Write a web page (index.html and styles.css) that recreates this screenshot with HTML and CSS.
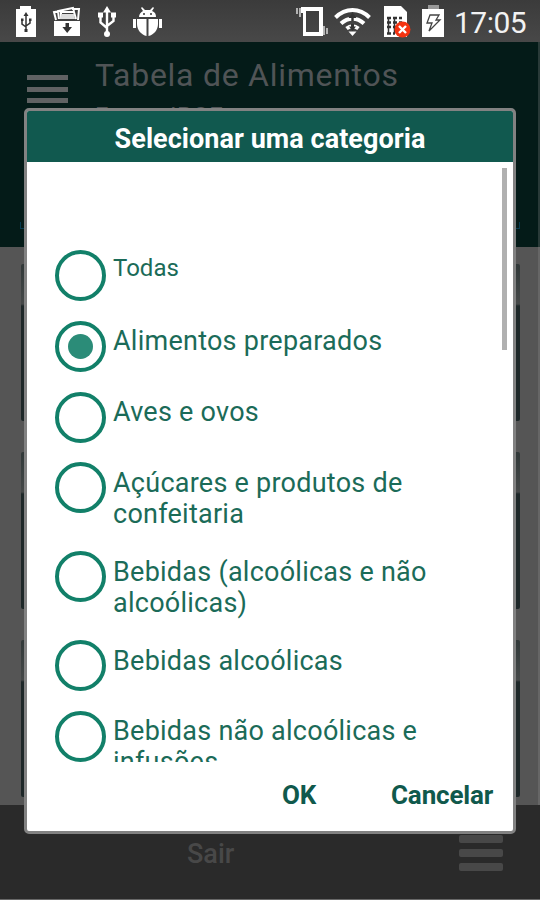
FILE: index.html
```html
<!DOCTYPE html>
<html lang="pt-BR">
<head>
<meta charset="utf-8">
<title>Tabela de Alimentos</title>
<link rel="stylesheet" href="styles.css">
</head>
<body>
<div class="screen">
  <div class="status">
    <svg class="icons-left" width="180" height="42" viewBox="0 0 180 42">
      <path fill="#fff" d="M20 6h11v3h5v28H16V9h4z"/>
      <g fill="none" stroke="#333" stroke-width="1.5"><path d="M26 15v16M22 20v4l4 3M30 20v3l-4 3"/></g>
      <path fill="#333" d="M26 12l2.500 4h-5zM24.500 29h3v3h-3zM21 18.500h2.500v2.500H21zM29 18.500h2.500v2.500H29z"/>
      <path fill="#fff" d="M54 21h26v15H54z"/>
      <path fill="none" stroke="#fff" stroke-width="2" d="M56 20l-2-8 7-1M59 19l-1-8 15-3 1 3M61 19V12h13l2 7M72 9h7l-1 11"/>
      <path fill="#ddd" d="M61 14h13l1 5H60z"/>
      <path fill="#333" d="M65.500 23h3.500v4h3l-4.800 6-4.800-6h3.100z"/>
      <g fill="none" stroke="#fff" stroke-width="2.400"><path d="M107 10v23M100.500 16v6.500l6.500 5.500M113.500 15v6l-6.500 5"/></g>
      <path fill="#fff" d="M107 6l4 6.500h-8zM98 12.500h5v5h-5zM111 12.500h5v5h-5z"/><circle cx="107" cy="34" r="3" fill="#fff"/>
      <path fill="#fff" d="M139 17c0-3 2-5 4-6l-2-3 1-1 3 3h5l3-3 1 1-2 3c3 1 4 3 4 6zM137 19h9.500v17c-5-1-9.500-6-9.500-12zM148.500 19h9.500v5c0 6-4.500 11-9.500 12zM133 19h3v9h-3zM159 19h3v9h-3z"/>
      <circle cx="144" cy="14" r="1" fill="#333"/><circle cx="151" cy="14" r="1" fill="#333"/>
    </svg>
    <svg class="icons-right" width="150" height="42" viewBox="296 0 150 42">
      <path fill="#fff" fill-rule="evenodd" d="M301 7h22v29h-20V13h-2zM306 11v21h13V11z"/>
      <path fill="none" stroke="#d0d0d0" stroke-width="1.600" d="M297 8v6M300 8v9M324 26v9M327 28v6"/>
      <g fill="none" stroke="#fff" stroke-width="4"><path d="M335.500 17.500c10-10 24-10 34 0"/><path d="M341 23.500c7-6.500 16-6.500 23 0"/><path d="M346.500 28.500c4-3 8-3 12 0"/></g>
      <path fill="#fff" d="M348.500 31.500h8l-4 4.500z"/>
      <path fill="#333" d="M352.500 12.500l4 5.500h-2.800v3h-2.400v-3h-2.800zM352.500 31l-3.500-4.500h2v-2.500h3v2.500h2z"/>
      <path fill="#fff" d="M384 6h17l6 6v25h-23z"/>
      <path fill="none" stroke="#333" stroke-width="2.500" stroke-dasharray="4 2" d="M387 18h15M387 22.500h15M387 27h9M387 33.500h8"/>
      <path fill="none" stroke="#333" stroke-width="1.500" d="M388.500 17v17M394.500 17v17"/>
      <circle cx="402.500" cy="29.500" r="8" fill="#f43210"/>
      <path stroke="#fff" stroke-width="2.400" d="M399 26l7 7M406 26l-7 7"/>
      <path fill="#999" d="M428 5h11v4h-11z"/><path fill="#fff" d="M422 9h22v28h-22z"/>
      <path fill="#fff" stroke="#444" stroke-width="1.300" d="M430 15h9l-3 5h4l-11 11 3-8h-5z"/>
    </svg>
    <span class="clock">17:05</span>
  </div>
  <div class="header">
    <div class="burger"><i></i><i></i><i></i></div>
    <div class="titles"><div class="title">Tabela de Alimentos</div><div class="sub">Fonte: IBGE</div></div>
    <div class="field"></div>
  </div>
  <div class="content">
    <div class="card"></div><div class="card"></div><div class="card"></div>
  </div>
  <div class="footer">
    <span class="exit">Sair</span>
    <div class="menu"><i></i><i></i><i></i></div>
  </div>
  <div class="dialog">
    <div class="dialog-title"><span>Selecionar uma categoria</span></div>
    <div class="list">
      <div class="option small"><span class="radio"></span><span class="label">Todas</span></div>
      <div class="option"><span class="radio on"></span><span class="label">Alimentos preparados</span></div>
      <div class="option"><span class="radio"></span><span class="label">Aves e ovos</span></div>
      <div class="option"><span class="radio"></span><span class="label">Açúcares e produtos de<br>confeitaria</span></div>
      <div class="option"><span class="radio"></span><span class="label">Bebidas (alcoólicas e não<br>alcoólicas)</span></div>
      <div class="option"><span class="radio"></span><span class="label">Bebidas alcoólicas</span></div>
      <div class="option"><span class="radio"></span><span class="label">Bebidas não alcoólicas e<br>infusões</span></div>
      <div class="scrollbar"></div>
    </div>
    <div class="actions"><span class="ok">OK</span><span class="cancel">Cancelar</span></div>
  </div>
</div>
</body>
</html>
```
FILE: styles.css
```css
* { box-sizing: border-box; }
body { margin: 0; font-family: Roboto, sans-serif; }
.screen { position: relative; width: 540px; height: 900px; overflow: hidden; display: flex; flex-direction: column; background: #555; }
.status { height: 42px; flex: none; display: flex; background: linear-gradient(#3b3b3b, #484848); }
.icons-right { margin-left: 116px; }
.clock { margin-left: 8px; color: #f2f2f2; font-size: 30px; line-height: 46px; letter-spacing: -0.5px; white-space: nowrap; }
.header { position: relative; height: 205px; flex: none; display: flex; background: #041b18; border-right: 2px solid #293a38; }
.field { position: absolute; left: 20px; top: 180px; width: 500px; height: 7px; border: 1px solid #073b50; border-top: 0; }
.burger { width: 41px; margin: 33px 0 0 27px; display: flex; flex-direction: column; gap: 6.7px; }
.burger i { height: 5px; flex: none; background: #606263; }
.titles { margin: 15px 0 0 27px; color: #505456; white-space: nowrap; }
.title { font-size: 32px; line-height: 36px; letter-spacing: 0.73px; }
.sub { font-size: 24px; line-height: 28px; margin-top: 9px; letter-spacing: 0.4px; }
.content { height: 558px; flex: none; padding: 17px 18px 0 21px; display: flex; flex-direction: column; gap: 31px; border-right: 2px solid #666; }
.card { height: 157px; border-radius: 2px; background: linear-gradient(#303838, #454848 40px, #1d2728 42px); }
.footer { height: 95px; flex: none; display: flex; background: #2a2a2a; border-bottom: 1px solid #686868; }
.exit { margin: 33px 0 0 187px; width: 50px; color: #484848; font-size: 27px; font-weight: 500; line-height: 32px; }
.menu { width: 44px; margin: 25px 0 0 222px; display: flex; flex-direction: column; gap: 6px; padding-top: 5px; }
.menu i { height: 8px; border-radius: 2px; background: #484848; }
.dialog { position: absolute; left: 24px; top: 108px; width: 492px; height: 726px; border: 3px solid #828282; border-radius: 5px; background: #fff; display: flex; flex-direction: column; overflow: hidden; color: #1b6b58; }
.dialog-title { height: 51px; flex: none; background: #11594f; color: #fff; font-size: 27px; font-weight: 700; line-height: 56px; letter-spacing: 0.05px; text-align: center; white-space: nowrap; }
.list { position: relative; height: 600px; flex: none; padding: 88px 0 0 28px; overflow: hidden; display: flex; flex-direction: column; gap: 19.8px; }
.option { display: flex; flex: none; gap: 7px; }
.radio { width: 51px; height: 51px; flex: none; border: 4px solid #128069; border-radius: 50%; display: flex; align-items: center; justify-content: center; }
.on::before { content: ""; width: 25px; height: 25px; border-radius: 50%; background: #2b8c78; }
.label { padding: 5.6px 0 1.4px; font-size: 27px; line-height: 31px; letter-spacing: 0.25px; white-space: nowrap; }
.small .label { font-size: 24px; padding-top: 3px; letter-spacing: 0; }
.scrollbar { position: absolute; left: 475px; top: 6px; width: 5px; height: 182px; background: #b0b0b0; }
.actions { display: flex; padding: 17px 0 0 255px; font-size: 26px; font-weight: 700; line-height: 32px; letter-spacing: -0.15px; color: #10594c; }
.ok { width: 109px; }
```
